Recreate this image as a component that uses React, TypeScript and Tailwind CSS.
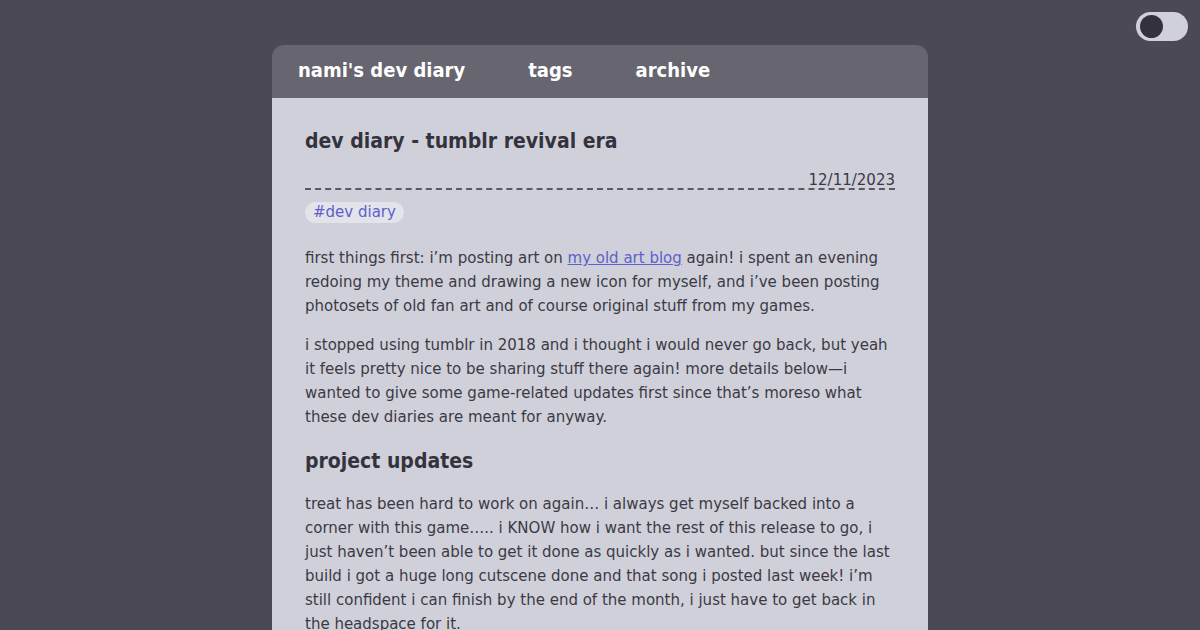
import React from 'react';

const paraCls = "mb-[15px] text-[15px] leading-[24px] text-[#3b3a44]";
const headCls = "font-['DejaVu_Sans',sans-serif] font-stretch-condensed font-bold text-[21px] leading-[30px] text-[#34333d]";

export default function App() {
  return (
    <div className="min-h-[630px] w-full bg-[#4b4956] font-['DejaVu_Sans',sans-serif] relative overflow-hidden">
      {/* theme toggle */}
      <button className="absolute right-[12px] top-[12px] w-[52px] h-[29px] rounded-full bg-[#d0d0da] flex items-center pl-[4px]">
        <span className="block w-[23px] h-[23px] rounded-full bg-[#33313c]" />
      </button>

      <div className="flex justify-center pt-[45px]">
        <div className="w-[656px] rounded-t-[12px] overflow-hidden">
          <nav className="h-[53px] bg-[#67656f] flex items-center gap-[63px] px-[26px] pb-[3px] text-white font-bold text-[20px] font-stretch-condensed">
            <a>nami's dev diary</a>
            <a>tags</a>
            <a>archive</a>
          </nav>

          <article className="bg-[#d0d0da] px-[33px] pt-[28px] pb-[40px]">
            <h1 className={headCls}>dev diary - tumblr revival era</h1>
            <div className="mt-[16px] border-b-2 border-dashed border-[#5a5963] text-right text-[15px] leading-[16px] text-[#3b3a44]">
              12/11/2023
            </div>
            <div className="mt-[10px] mb-[22px]">
              <span className="inline-block rounded-full bg-[#e3e3ec] px-[8px] text-[15px] leading-[21px] text-[#5d61c9]">#dev diary</span>
            </div>

            <p className={paraCls}>
              first things first: i’m posting art on <a className="text-[#5d61c9] underline">my old art blog</a> again! i spent an evening redoing my theme and drawing a new icon for myself, and i’ve been posting photosets of old fan art and of course original stuff from my games.
            </p>
            <p className={paraCls}>
              i stopped using tumblr in 2018 and i thought i would never go back, but yeah it feels pretty nice to be sharing stuff there again! more details below—i wanted to give some game-related updates first since that’s moreso what these dev diaries are meant for anyway.
            </p>

            <h2 className={`${headCls} mt-[17px] mb-[16px]`}>project updates</h2>

            <p className={paraCls}>
              treat has been hard to work on again… i always get myself backed into a corner with this game….. i KNOW how i want the rest of this release to go, i just haven’t been able to get it done as quickly as i wanted. but since the last build i got a huge long cutscene done and that song i posted last week! i’m still confident i can finish by the end of the month, i just have to get back in the headspace for it.
            </p>
          </article>
        </div>
      </div>
    </div>
  );
}
